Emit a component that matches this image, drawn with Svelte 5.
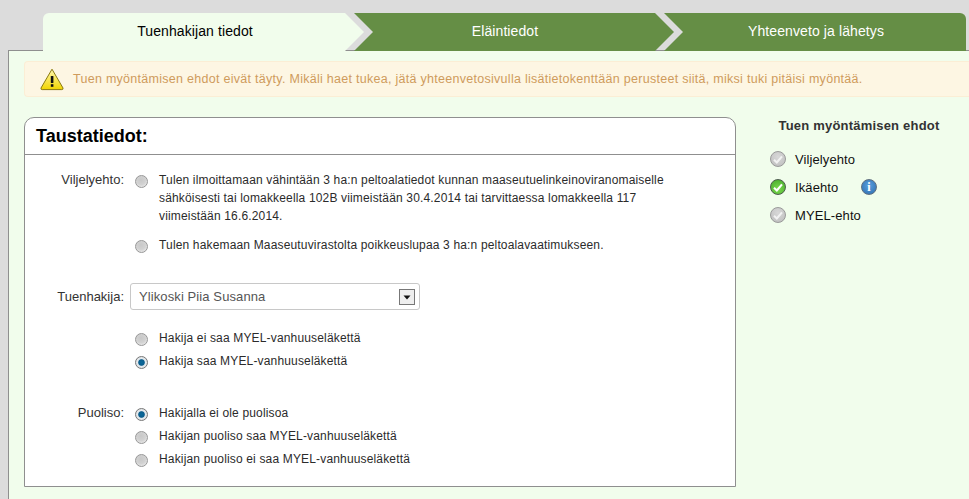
<script>
	const steps = [
		{ label: 'Tuenhakijan tiedot', kind: 'first' },
		{ label: 'Eläintiedot', kind: 'middle' },
		{ label: 'Yhteenveto ja lähetys', kind: 'last' }
	];

	const conditions = [
		{ label: 'Viljelyehto', ok: false },
		{ label: 'Ikäehto', ok: true, info: true },
		{ label: 'MYEL-ehto', ok: false }
	];

	let farming = $state('');
	let pension = $state('yes');
	let spouse = $state('none');
</script>

<div class="page">
	<nav class="steps">
		{#each steps as step}
			<div class="step {step.kind}"><span>{step.label}</span></div>
		{/each}
	</nav>

	<main class="panel">
		<div class="notice">
			<svg class="warn" width="24" height="23" viewBox="0 0 24 23">
				<defs>
					<linearGradient id="warnfill" x1="0" y1="0" x2="0" y2="1">
						<stop offset="0" stop-color="#fff8b0" />
						<stop offset="1" stop-color="#f2d500" />
					</linearGradient>
				</defs>
				<path d="M12 1.2 L23 20 Q23.4 21.6 21.8 21.6 L2.2 21.6 Q0.6 21.6 1 20 Z" fill="url(#warnfill)" stroke="#8a7a10" stroke-width="1" stroke-linejoin="round" />
				<rect x="10.8" y="8" width="2.6" height="7" rx="0.6" fill="#111" />
				<rect x="10.8" y="16.2" width="2.6" height="2.6" fill="#111" />
			</svg>
			<span>Tuen myöntämisen ehdot eivät täyty. Mikäli haet tukea, jätä yhteenvetosivulla lisätietokenttään perusteet siitä, miksi tuki pitäisi myöntää.</span>
		</div>

		<div class="columns">
			<section class="card">
				<h2>Taustatiedot:</h2>
				<div class="form">
					<div class="label">Viljelyehto:</div>
					<div class="options farming">
						<label class="opt">
							<input type="radio" name="farming" value="a" bind:group={farming} />
							<span>Tulen ilmoittamaan vähintään 3 ha:n peltoalatiedot kunnan maaseutuelinkeinoviranomaiselle sähköisesti tai lomakkeella 102B viimeistään 30.4.2014 tai tarvittaessa lomakkeella 117 viimeistään 16.6.2014.</span>
						</label>
						<label class="opt">
							<input type="radio" name="farming" value="b" bind:group={farming} />
							<span>Tulen hakemaan Maaseutuvirastolta poikkeuslupaa 3 ha:n peltoalavaatimukseen.</span>
						</label>
					</div>

					<div class="label applicant">Tuenhakija:</div>
					<div class="applicant-field">
						<div class="select">
							<select>
								<option>Ylikoski Piia Susanna</option>
							</select>
							<svg class="arrow" width="16" height="16" viewBox="0 0 16 16">
								<rect x="0.5" y="0.5" width="15" height="15" fill="#eee" stroke="#777" />
								<path d="M4.5 6.5 H11.5 L8 10.5 Z" fill="#111" />
							</svg>
						</div>
					</div>

					<div></div>
					<div class="options pension">
						<label class="opt">
							<input type="radio" name="pension" value="no" bind:group={pension} />
							<span>Hakija ei saa MYEL-vanhuuseläkettä</span>
						</label>
						<label class="opt">
							<input type="radio" name="pension" value="yes" bind:group={pension} />
							<span>Hakija saa MYEL-vanhuuseläkettä</span>
						</label>
					</div>

					<div class="label spouse-label">Puoliso:</div>
					<div class="options spouse">
						<label class="opt">
							<input type="radio" name="spouse" value="none" bind:group={spouse} />
							<span>Hakijalla ei ole puolisoa</span>
						</label>
						<label class="opt">
							<input type="radio" name="spouse" value="yes" bind:group={spouse} />
							<span>Hakijan puoliso saa MYEL-vanhuuseläkettä</span>
						</label>
						<label class="opt">
							<input type="radio" name="spouse" value="no" bind:group={spouse} />
							<span>Hakijan puoliso ei saa MYEL-vanhuuseläkettä</span>
						</label>
					</div>
				</div>
			</section>

			<aside class="side">
				<h3>Tuen myöntämisen ehdot</h3>
				<ul>
					{#each conditions as c}
						<li>
							<span class="dot" class:ok={c.ok}>
								<svg width="10" height="9" viewBox="0 0 10 9">
									<path d="M1 4.8 L3.8 7.4 L9 1.4" fill="none" stroke={c.ok ? '#fff' : '#f2f2f2'} stroke-width="2.1" />
								</svg>
							</span>
							<span class="cond">{c.label}</span>
							{#if c.info}
								<span class="info">i</span>
							{/if}
						</li>
					{/each}
				</ul>
			</aside>
		</div>
	</main>
</div>

<style>
	:global(body) {
		margin: 0;
		background: #dcdcdc;
		overflow: hidden;
		font-family: 'Liberation Sans', Arial, sans-serif;
		font-size: 12px;
		color: #2b2b2b;
	}

	.page {
		height: 499px;
		overflow: hidden;
		padding-top: 13px;
		box-sizing: border-box;
	}

	.steps {
		display: flex;
		height: 38px;
		margin-left: 43px;
		position: relative;
		z-index: 1;
	}

	.step {
		height: 38px;
		line-height: 37px;
		font-size: 14px;
		letter-spacing: 0.1px;
		text-align: center;
		background: #658e45;
		color: #fff;
		box-sizing: border-box;
	}

	.first {
		width: 321px;
		padding-right: 17px;
		background: #f1fdec;
		color: #000;
		border-top-left-radius: 6px;
		clip-path: polygon(0 0, 302px 0, 321px 19px, 302px 38px, 0 38px);
	}

	.middle {
		width: 320px;
		margin-left: -10px;
		padding-right: 18px;
		clip-path: polygon(0 0, 301px 0, 320px 19px, 301px 38px, 0 38px, 19px 19px);
	}

	.last {
		width: 302px;
		margin-left: -10px;
		padding-left: 2px;
		border-top-right-radius: 6px;
		clip-path: polygon(0 0, 302px 0, 302px 38px, 0 38px, 19px 19px);
	}

	.panel {
		margin: -1px 0 0 8px;
		height: 470px;
		padding: 10px 0 0 15px;
		background: #f1fdec;
		border-top: 1px solid #8f8f8f;
		border-left: 1px solid #8f8f8f;
	}

	.notice {
		display: flex;
		align-items: center;
		height: 36px;
		box-sizing: border-box;
		padding-left: 15px;
		gap: 9px;
		background: #fdf6e3;
		border: 1px solid #fbeed5;
		border-right: 0;
		border-radius: 4px 0 0 4px;
		color: #cf9b5c;
		font-size: 12.5px;
		letter-spacing: 0.28px;
	}

	.warn {
		flex: none;
		margin-top: 1px;
	}

	.columns {
		display: flex;
		margin-top: 20px;
	}

	.card {
		width: 712px;
		height: 370px;
		box-sizing: border-box;
		background: #fff;
		border: 1px solid #8f8f8f;
		border-radius: 10px 10px 0 0;
		flex: none;
	}

	h2 {
		margin: 0;
		height: 36px;
		line-height: 37px;
		padding-left: 11px;
		font-size: 18px;
		color: #000;
		border-bottom: 1px solid #8f8f8f;
	}

	.form {
		display: grid;
		grid-template-columns: 99px 1fr;
		column-gap: 11px;
		padding-top: 16px;
	}

	.label {
		text-align: right;
		line-height: 18px;
		font-size: 13px;
		color: #333;
	}

	.options {
		display: flex;
		flex-direction: column;
	}

	.opt {
		display: flex;
		gap: 11px;
		line-height: 18px;
		letter-spacing: 0.16px;
		color: #2b2b2b;
	}

	.opt input {
		appearance: none;
		flex: none;
		width: 13px;
		height: 13px;
		margin: 4px 0 0;
		border-radius: 50%;
		border: 1px solid #979797;
		background: radial-gradient(circle at 45% 35%, #c8c8c8, #d2d2d2 50%, #f2f2f2 95%);
		box-sizing: border-box;
	}

	.opt input:checked {
		background: radial-gradient(circle, #0a6a9c 0, #0a5d8c 2.8px, #e4eaee 3.8px, #dadada 100%);
		border-color: #777;
	}

	.farming {
		gap: 11px;
		width: 530px;
	}

	.applicant {
		margin-top: 29px;
		line-height: 27px;
	}

	.applicant-field {
		margin: 29px 0 0 -5px;
	}

	.select {
		position: relative;
		width: 290px;
		height: 27px;
	}

	.select select {
		appearance: none;
		width: 100%;
		height: 100%;
		padding: 0 0 0 8px;
		font: 13px 'Liberation Sans', Arial, sans-serif;
		letter-spacing: 0.1px;
		color: #555;
		background: #fff;
		border: 1px solid #c8c8c8;
		border-radius: 3px;
	}

	.arrow {
		position: absolute;
		right: 5px;
		top: 6px;
		pointer-events: none;
	}

	.pension {
		margin-top: 19px;
		gap: 5px;
	}

	.spouse-label {
		margin-top: 34px;
	}

	.spouse {
		margin-top: 34px;
		gap: 5px;
	}

	.side {
		width: 214px;
		margin-left: 16px;
	}

	h3 {
		margin: 2px 0 0;
		font-size: 13px;
		letter-spacing: 0.2px;
		line-height: 14px;
		text-align: center;
		color: #333;
	}

	ul {
		list-style: none;
		margin: 12px 0 0;
		padding: 0 0 0 18px;
	}

	li {
		display: flex;
		align-items: center;
		height: 28px;
		font-size: 13px;
		letter-spacing: 0.1px;
		color: #111;
	}

	.dot {
		flex: none;
		width: 16px;
		height: 16px;
		box-sizing: border-box;
		border-radius: 50%;
		border: 1px solid #9a9a9a;
		background: radial-gradient(circle at 50% 35%, #d8d8d8, #bdbdbd);
		display: flex;
		align-items: center;
		justify-content: center;
	}

	.dot.ok {
		border-color: #4c5c4c;
		background: radial-gradient(circle at 50% 65%, #7cdb4e, #43a72a);
	}

	.cond {
		margin-left: 9px;
		min-width: 66px;
		white-space: nowrap;
	}

	.info {
		flex: none;
		width: 16px;
		height: 16px;
		box-sizing: border-box;
		border-radius: 50%;
		border: 1px solid #5f6f80;
		background: radial-gradient(circle at 50% 40%, #5aa0de, #2c6cae);
		color: #fff;
		font: bold 12px/14px 'Liberation Serif', serif;
		text-align: center;
	}
</style>
